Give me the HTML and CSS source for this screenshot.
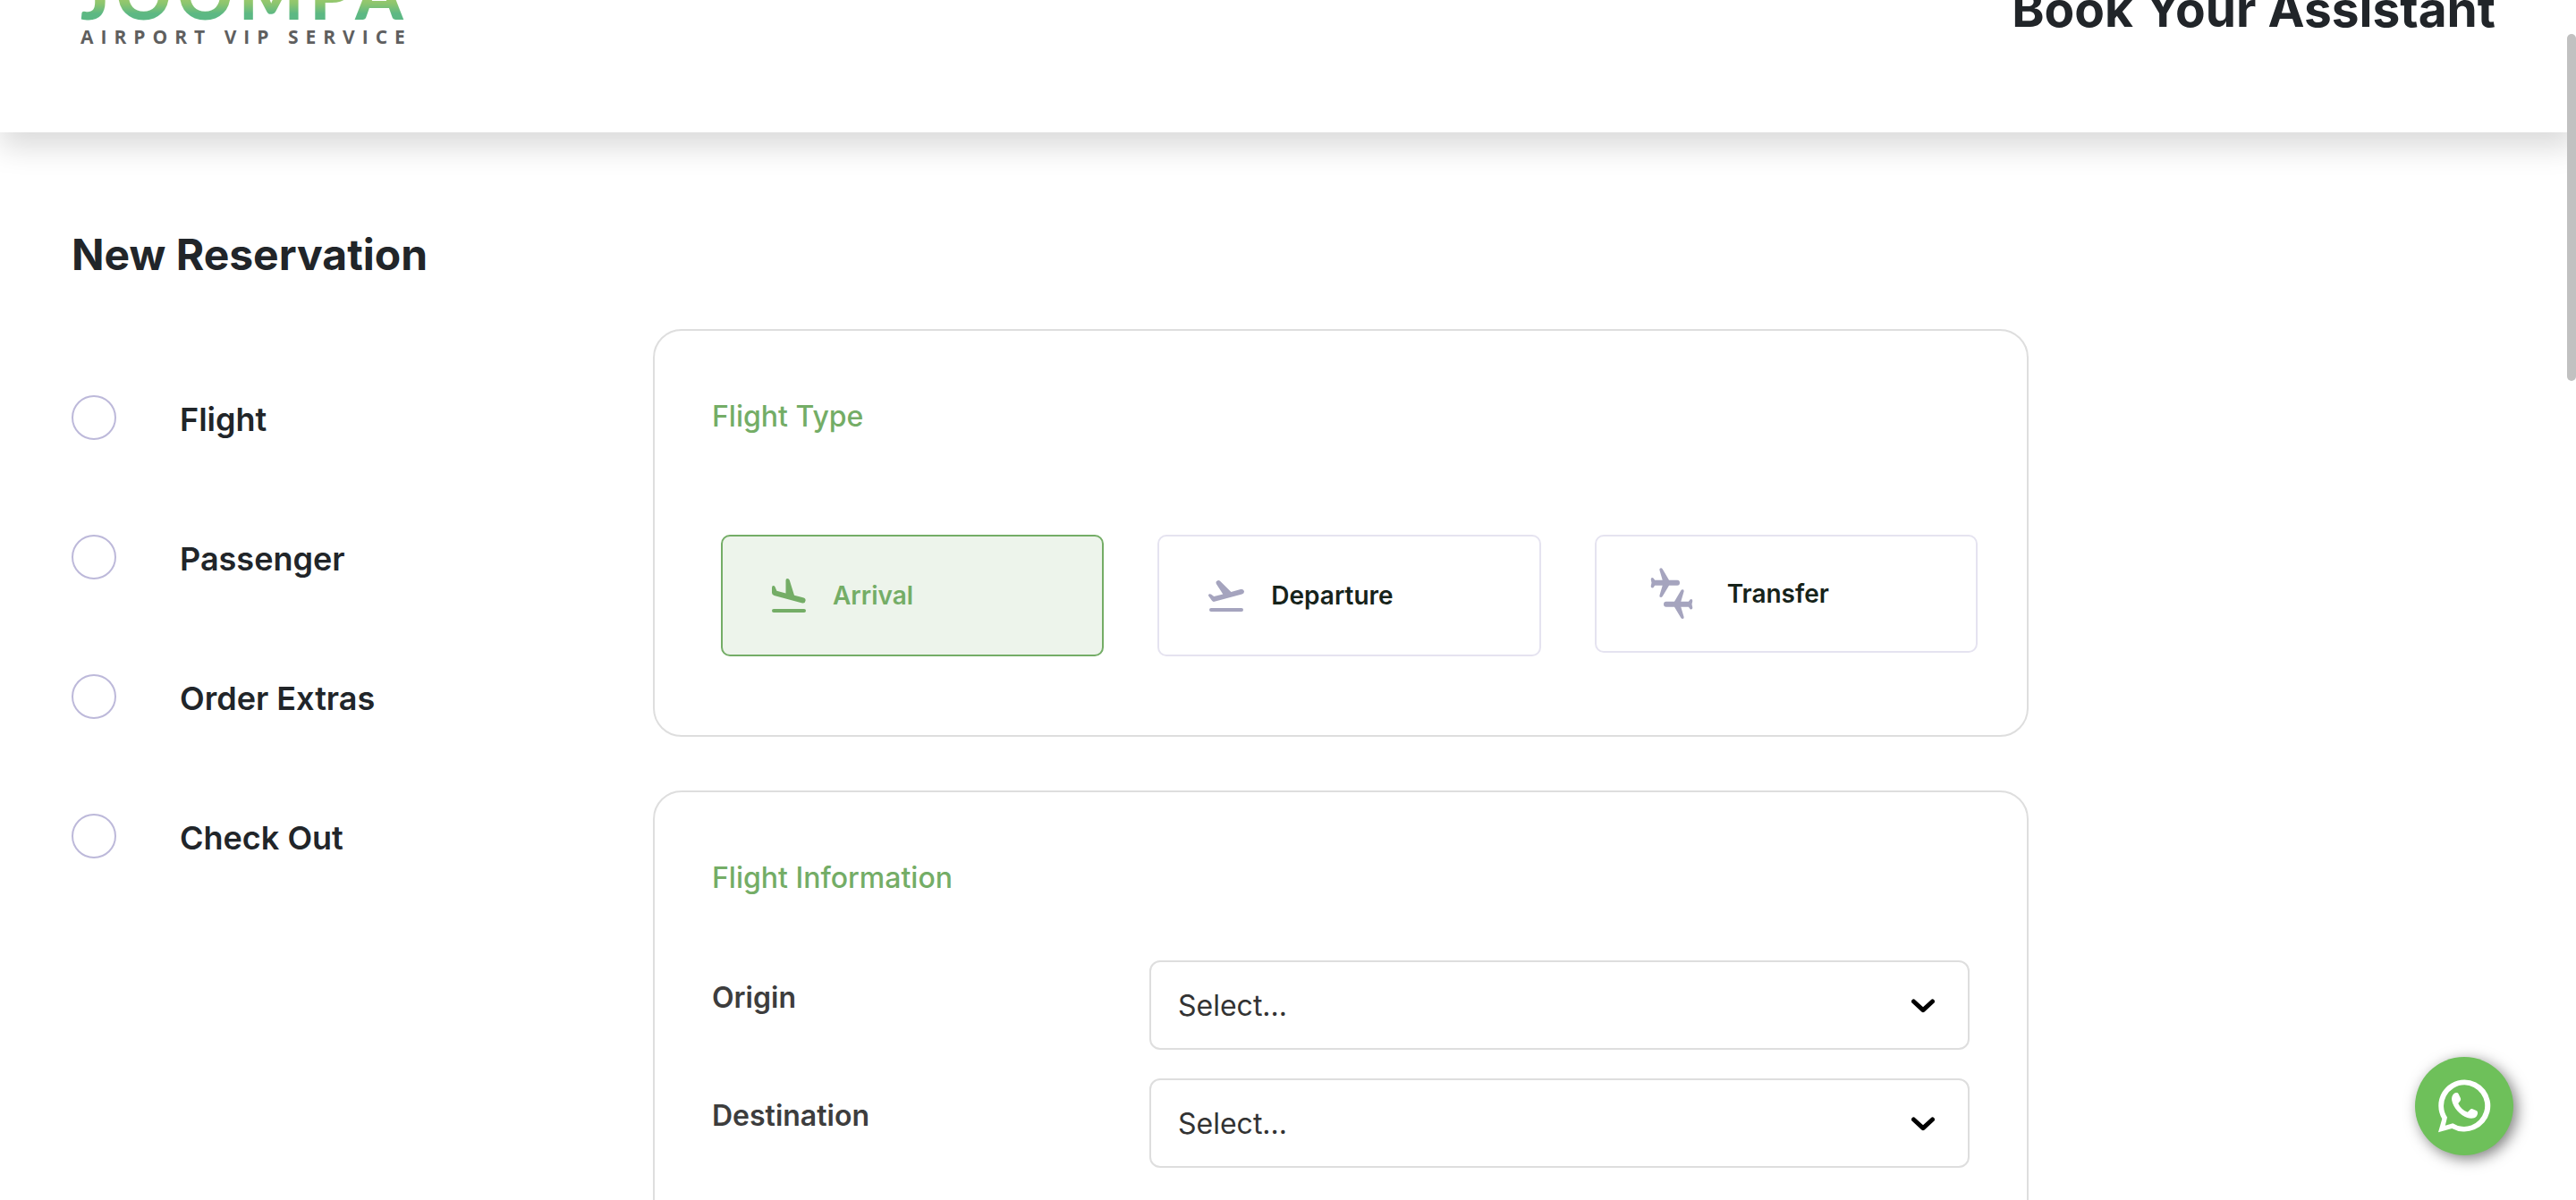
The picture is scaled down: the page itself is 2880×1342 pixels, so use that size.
FILE: index.html
```html
<!DOCTYPE html>
<html lang="en">
<head>
<meta charset="utf-8">
<meta name="viewport" content="width=device-width, initial-scale=1">
<title>Book Your Assistant</title>
<link rel="stylesheet" href="styles.css">
</head>
<body>
<div class="page">
  <header class="header">
    <a class="logo" href="#">
      <span class="logo-name">JOOMPA</span>
      <span class="logo-tagline">AIRPORT VIP SERVICE</span>
    </a>
    <h1 class="header-title">Book Your Assistant</h1>
  </header>

  <main class="main">
    <h2 class="main-title">New Reservation</h2>
    <div class="columns">
      <ol class="steps">
        <li class="step"><span class="step-dot"></span>Flight</li>
        <li class="step"><span class="step-dot"></span>Passenger</li>
        <li class="step"><span class="step-dot"></span>Order Extras</li>
        <li class="step"><span class="step-dot"></span>Check Out</li>
      </ol>

      <form class="cards">
        <section class="card">
          <h3 class="card-title">Flight Type</h3>
          <div class="types">
            <button class="type type-active" type="button" aria-pressed="true">
              <svg class="type-icon" width="38" height="38" viewBox="0 0 38 38" fill="currentColor" aria-hidden="true">
                <path d="M0 10.200Q0 8 1.600 8Q3 8 3.500 9.300L5.400 13.700L15.500 16.500V2Q15.500 0 17.300 0Q19.200 0 19.700 1.700L25 18.700L34.700 21.300Q38 22.200 37.600 24.700Q37 28.100 34 27.400L2.500 18.900Q0 18.200 0 16Z"/>
                <rect x="0" y="34" width="38" height="4" rx="2"/>
              </svg>
              Arrival
            </button>
            <button class="type" type="button" aria-pressed="false">
              <svg class="type-icon" width="40" height="38" viewBox="0 -2 40 38" fill="currentColor" aria-hidden="true">
                <path d="M.2 17.500Q-.5 15.700 1.300 15.200Q2.300 15 3.200 15.700L6.200 18L16.300 15.500L9 4.200Q7.800 2 9.500 .7Q11.500-.7 13.300 1L25.400 12.900L36 10.100Q39.200 9.500 39.900 12Q40.400 14.600 37.500 15.500L6.800 23.800Q5 24.300 4 22.800Z"/>
                <rect x="1" y="31" width="38" height="4" rx="2"/>
              </svg>
              Departure
            </button>
            <button class="type type-transfer" type="button" aria-pressed="false">
              <svg class="type-icon" width="48" height="58" viewBox="0 0 48 58" fill="currentColor" aria-hidden="true">
                <g id="plane">
                  <path d="M.7 13Q.7 11 2.300 11Q3.600 11 4.200 12.500L5.200 13.700H13.700L10.400 2.500Q10 .5 11.800 .3Q13 .2 13.800 1.600L21 13.700H30.200Q33 13.900 33 16.700Q33 19.500 30.200 19.700H21L13.800 31.800Q13 33.200 11.800 33.100Q10 33 10.400 31L13.700 19.700H5.200L4.200 21Q3.600 22.500 2.300 22.500Q.7 22.500 .7 20.500L1.500 16.700Z"/>
                </g>
                <use href="#plane" transform="rotate(180 24 28.700)"/>
              </svg>
              Transfer
            </button>
          </div>
        </section>

        <section class="card">
          <h3 class="card-title">Flight Information</h3>
          <div class="fields">
            <div class="field">
              <label class="field-label" for="origin">Origin</label>
              <div class="select">
                <select class="select-input" id="origin"><option>Select...</option></select>
                <svg class="select-arrow" width="26" height="16" viewBox="0 0 26 16" aria-hidden="true"><path d="M2.500 3L13 12.700L23.500 3"/></svg>
              </div>
            </div>
            <div class="field">
              <label class="field-label" for="destination">Destination</label>
              <div class="select">
                <select class="select-input" id="destination"><option>Select...</option></select>
                <svg class="select-arrow" width="26" height="16" viewBox="0 0 26 16" aria-hidden="true"><path d="M2.500 3L13 12.700L23.500 3"/></svg>
              </div>
            </div>
          </div>
        </section>
      </form>
    </div>
  </main>
</div>

<a class="whatsapp" href="#" aria-label="WhatsApp">
  <svg width="60" height="60" viewBox="0 0 60 60" aria-hidden="true">
    <path fill="#fff" fill-rule="evenodd" d="M30.300 .5A29 29 0 1 1 16.300 54.900L1 59.300L5.300 44.200A29 29 0 0 1 30.300 .5ZM30.300 6.300A23.300 23.300 0 0 0 11 42.600L8.800 51.700L17.300 49.200A23.300 23.300 0 1 0 30.300 6.300Z"/>
    <path fill="#fff" d="M18.300 16.200C20 14.800 22.700 14.400 23.600 16.200L26 21.300C26.600 23.300 25.500 24.500 23.300 27C25.300 31.500 29.300 35 33.800 36.800C35.800 35 37 32.700 38.800 32.900L44 35.200C45.700 36.300 45.300 39.300 43.700 41.500C41.700 44 37.300 44.200 33.500 43C25.500 40.300 17.500 31.500 16.200 23.500C15.700 20.500 16.500 18 18.300 16.200Z"/>
  </svg>
</a>
<div class="scroll-thumb"></div>
</body>
</html>
```
FILE: styles.css
```css
* {
  box-sizing: border-box;
}

html {
  height: 100%;
  overflow: hidden;
}

body {
  margin: 0;
  height: 100%;
  overflow: hidden;
  background: #fff;
  color: #212529;
  font-family: Inter, "Liberation Sans", sans-serif;
}

h1,
h2,
h3 {
  margin: 0;
}

/* The page opens scrolled part of the way past the header. */
.page {
  margin-top: -128px;
}

.header {
  display: flex;
  align-items: center;
  justify-content: space-between;
  height: 276px;
  padding: 0 90px;
  background: #fff;
  box-shadow: 0 16px 32px rgba(0, 0, 0, 0.15);
}

.logo {
  display: flex;
  flex-direction: column;
  padding-bottom: 8px;
  text-decoration: none;
}

.logo-name {
  background: linear-gradient(#f0dc5a 10%, #8cc56f 66%, #5cb884 82%);
  background-clip: text;
  color: transparent;
  font-family: Lato, sans-serif;
  font-size: 76px;
  font-weight: 900;
  line-height: 70px;
  letter-spacing: 7px;
}

.logo-tagline {
  color: #5f5f5f;
  font-family: "Open Sans", sans-serif;
  font-size: 21px;
  font-weight: 700;
  line-height: 26px;
  letter-spacing: 8px;
}

.header-title {
  font-size: 55px;
  font-weight: 700;
  line-height: 68px;
}

.main {
  padding: 107px 80px 0;
}

.main-title {
  font-size: 48px;
  font-weight: 700;
  line-height: 60px;
}

.columns {
  display: grid;
  grid-template-columns: 650fr 1538fr 532fr;
  margin-top: 53px;
}

.steps {
  display: flex;
  flex-direction: column;
  gap: 106px;
  margin: 0;
  padding: 74px 0 0;
  list-style: none;
}

.step {
  display: flex;
  gap: 71px;
  height: 50px;
  font-size: 36px;
  font-weight: 600;
  line-height: 54px;
}

.step-dot {
  width: 50px;
  height: 50px;
  border: 2px solid #bdb9da;
  border-radius: 50%;
}

.cards {
  display: flex;
  flex-direction: column;
  gap: 60px;
}

.card {
  padding: 74px 64px 88px;
  border: 2px solid #dedede;
  border-radius: 32px;
}

.card-title {
  color: #74ad66;
  font-size: 32px;
  font-weight: 500;
  line-height: 44px;
}

.types {
  display: grid;
  grid-template-columns: repeat(3, 1fr);
  align-items: start;
  gap: 60px;
  margin: 110px -9px 0 10px;
}

.type {
  display: flex;
  align-items: center;
  gap: 30px;
  height: 136px;
  padding: 0 55px;
  border: 2px solid #e5e3f0;
  border-radius: 10px;
  background: #fff;
  color: #16231a;
  font-family: inherit;
  font-size: 28px;
  font-weight: 600;
}

.type-icon {
  flex: none;
  color: #a5a4be;
}

.type-active {
  border-color: #74ad66;
  background: #edf4eb;
  color: #74ad66;
}

.type-active .type-icon {
  color: inherit;
}

.type-transfer {
  gap: 38px;
  height: 132px;
  padding: 0 60px;
}

.fields {
  display: flex;
  flex-direction: column;
  gap: 32px;
  margin-top: 70px;
}

.field {
  display: grid;
  grid-template-columns: 489fr 917fr;
}

.field-label {
  padding-top: 20px;
  color: #3d3d3d;
  font-size: 32px;
  font-weight: 600;
  line-height: 44px;
}

.select {
  position: relative;
}

.select-input {
  display: block;
  width: 100%;
  height: 100px;
  padding: 0 30px;
  border: 2px solid #dedede;
  border-radius: 12px;
  background: #fff;
  color: #333;
  font-family: inherit;
  font-size: 32px;
  appearance: none;
}

.select-arrow {
  position: absolute;
  top: 43px;
  right: 39px;
  fill: none;
  stroke: #000;
  stroke-width: 5;
  stroke-linecap: round;
  stroke-linejoin: round;
  pointer-events: none;
}

.whatsapp {
  position: fixed;
  right: 70px;
  bottom: 50px;
  display: flex;
  align-items: center;
  justify-content: center;
  width: 110px;
  height: 110px;
  border-radius: 50%;
  background: #6ec05a;
  box-shadow: 4px 4px 16px rgba(0, 0, 0, 0.5);
}

.scroll-thumb {
  position: fixed;
  top: 38px;
  right: 0;
  width: 10px;
  height: 388px;
  border-radius: 5px;
  background: #c1c1c1;
}
```
